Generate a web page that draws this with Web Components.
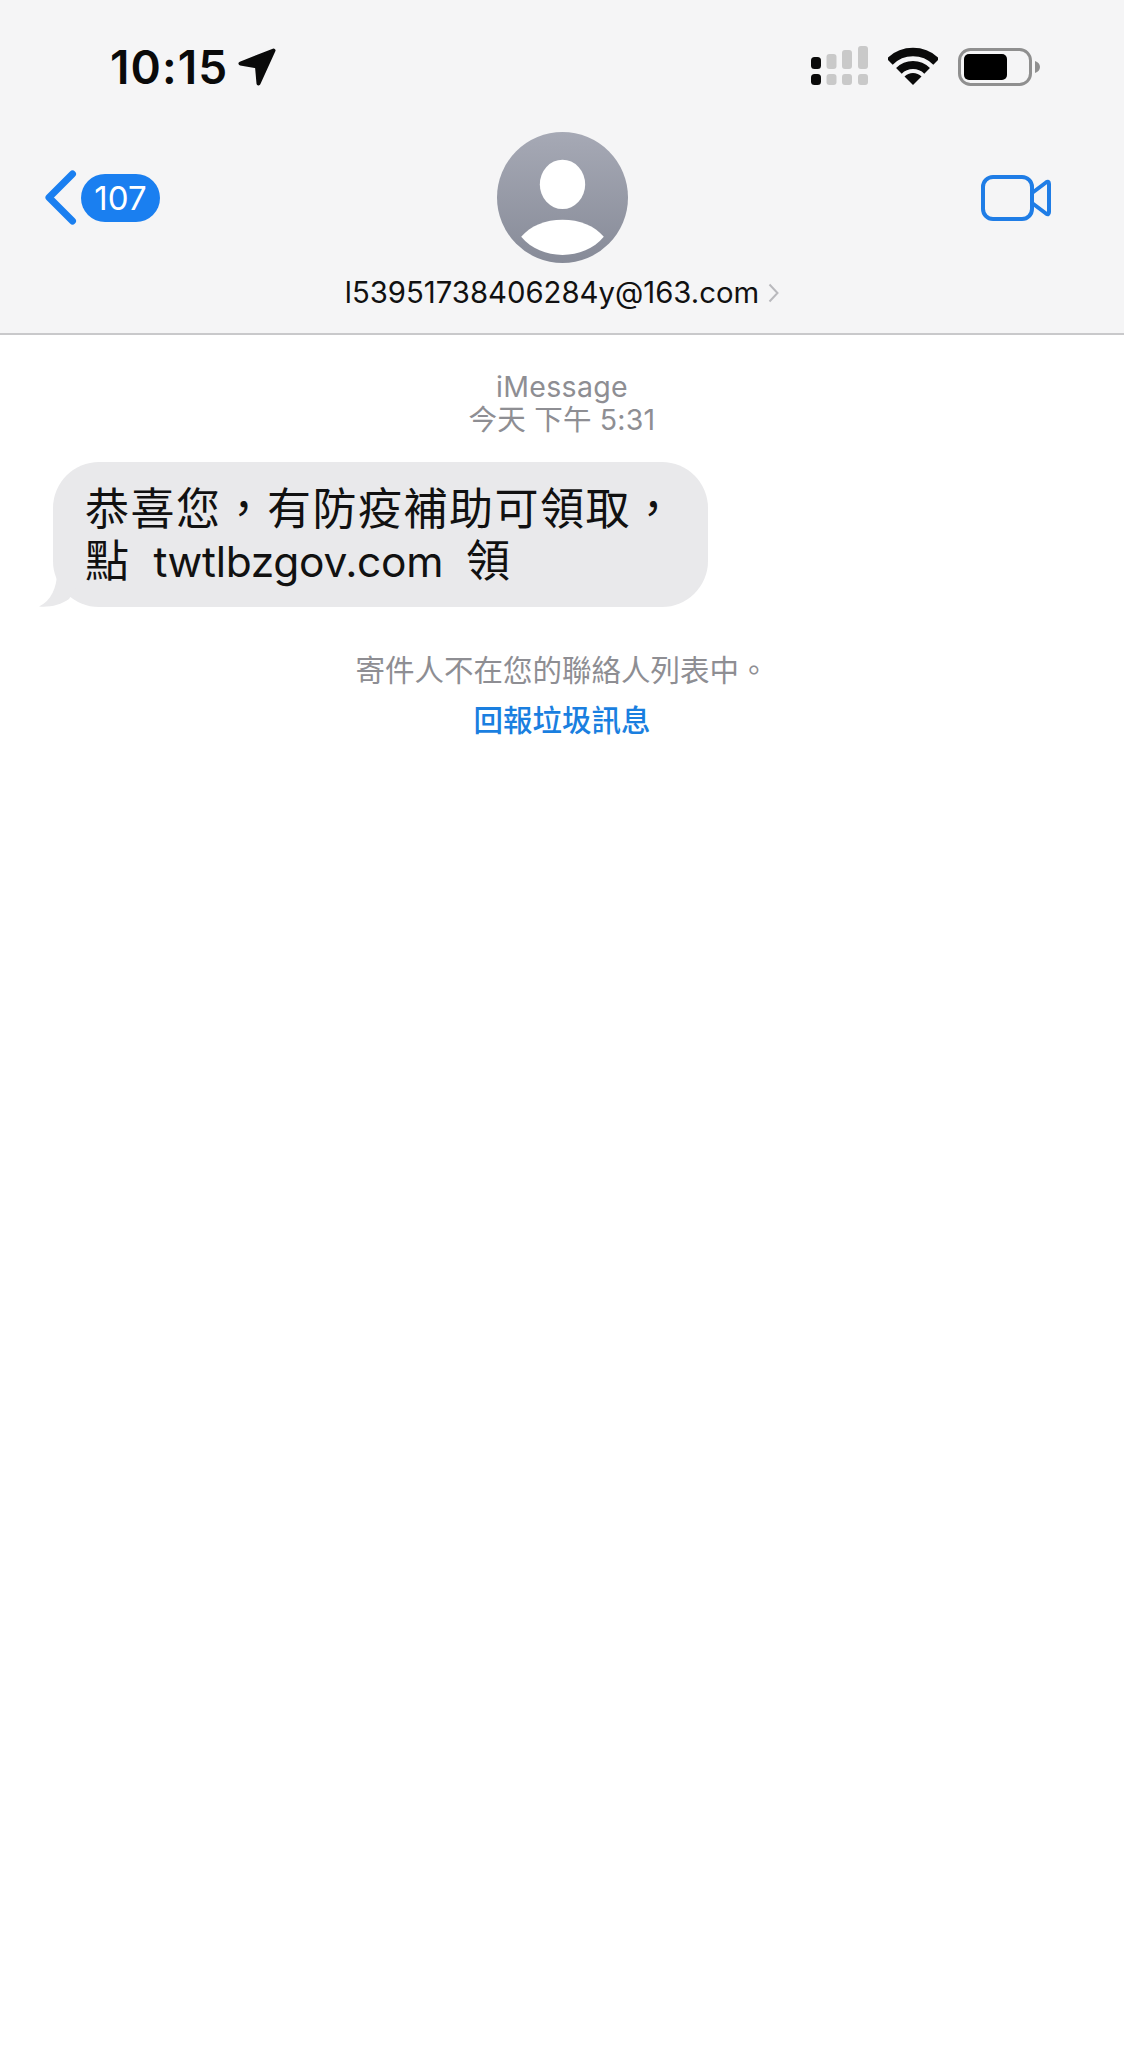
<!DOCTYPE html>
<html lang="zh-Hant">
<head>
<meta charset="utf-8">
<title>iMessage</title>
<style>
  html, body { margin: 0; padding: 0; background: #fff; }
  body { font-family: Inter, "Noto Sans CJK TC", sans-serif; min-height: 2048px; }
</style>
</head>
<body>
<ios-header>
  <ios-status-bar slot="status" time="10:15"></ios-status-bar>
  <ios-nav slot="nav" count="107"></ios-nav>
  <ios-contact slot="contact" address="l53951738406284y@163.com"></ios-contact>
</ios-header>
<chat-thread>
  <chat-stamp service="iMessage" time="今天 下午 5:31"></chat-stamp>
  <chat-bubble>恭喜您&#65292;有防疫補助可領取&#65292;<br>點 <span style="font-size:42.500px;letter-spacing:-0.3px;word-spacing:0">twtlbzgov.com</span> 領</chat-bubble>
  <sender-notice text="寄件人不在您的聯絡人列表中。" action="回報垃圾訊息"></sender-notice>
</chat-thread>
<script>
function def(name, html) {
  customElements.define(name, class extends HTMLElement {
    connectedCallback() {
      if (this.shadowRoot) return;
      const root = this.attachShadow({ mode: 'open' });
      root.innerHTML = typeof html === 'function' ? html(this) : html;
    }
  });
}

def('ios-header', `
<style>
  :host { display: block; background: #f5f5f6; border-bottom: 2px solid #c9c9cb; height: 333px; box-sizing: content-box; }
  .wrap { display: flex; flex-direction: column; padding-top: 46px; }
</style>
<div class="wrap"><slot name="status"></slot><slot name="nav"></slot><slot name="contact"></slot></div>`);

def('ios-status-bar', el => `
<style>
  :host { display: flex; justify-content: space-between; align-items: center; height: 41px; padding: 0 84px 0 110px; }
  .left { display: flex; align-items: center; gap: 10px; }
  .time { font: 600 46px/41px Inter, sans-serif; color: #0a0a0a; letter-spacing: 1.100px; padding-top: 2px; }
  .right { display: flex; align-items: center; gap: 20px; }
  svg { display: block; }
</style>
<div class="left">
  <span class="time">${el.getAttribute('time')}</span>
  <svg width="38" height="38" viewBox="0 0 38 38"><path d="M35.500 2.500 L2.500 15.500 L19 18.500 L20.500 35.500 Z" fill="#0a0a0a" stroke="#0a0a0a" stroke-width="4" stroke-linejoin="round"/></svg>
</div>
<div class="right">
  <svg width="58" height="41" viewBox="0 0 58 41">
    <g fill="#c9c9c9">
      <rect x="16.500" y="8" width="10" height="15" rx="3"/><rect x="32" y="4" width="10" height="19" rx="3"/><rect x="48" y="0" width="10" height="23" rx="3"/>
      <rect x="16.500" y="28" width="10" height="11" rx="3"/><rect x="32" y="28" width="10" height="11" rx="3"/><rect x="48" y="28" width="10" height="11" rx="3"/>
    </g>
    <g fill="#0a0a0a"><rect x="1" y="11" width="10" height="12" rx="3.500"/><rect x="1" y="28" width="10" height="11" rx="3.500"/></g>
  </svg>
  <svg width="50" height="38" viewBox="0 0 50 38" style="margin-top:-2px">
    <g fill="none" stroke="#0a0a0a">
      <path d="M1.700 14.700 A33 33 0 0 1 48.300 14.700" stroke-width="8.500"/>
      <path d="M10.900 23.900 A20 20 0 0 1 39.100 23.900" stroke-width="8"/>
    </g>
    <path d="M16.500 29.500 A12 12 0 0 1 33.500 29.500 L25 38 Z" fill="#0a0a0a"/>
  </svg>
  <svg width="82" height="38" viewBox="0 0 82 38">
    <rect x="1.500" y="1.500" width="71" height="35" rx="11" fill="none" stroke="#8f8f8f" stroke-width="3"/>
    <rect x="6" y="6" width="43" height="26" rx="5" fill="#000"/>
    <path d="M77 13 C80 14 82 16 82 19 C82 22 80 24 77 25 Z" fill="#8f8f8f"/>
  </svg>
</div>`);

def('ios-nav', el => `
<style>
  :host { display: grid; grid-template-columns: 1fr auto 1fr; align-items: center; padding: 45px 44px 0 44px; }
  .back { display: flex; align-items: center; gap: 4px; }
  .badge { font: 400 33px/48px Inter, sans-serif; color: #fff; background: #1a7ff0; border-radius: 24px; width: 79px; height: 48px; text-align: center; letter-spacing: 0; }
  .avatar { display: block; }
  .video { justify-self: end; display: block; margin-right: 29px; }
</style>
<div class="back">
  <svg width="33" height="55" viewBox="0 0 33 55"><path d="M28.500 4 L5 27.500 L28.500 51" fill="none" stroke="#1a7ff0" stroke-width="7" stroke-linecap="round" stroke-linejoin="round"/></svg>
  <span class="badge">${el.getAttribute('count')}</span>
</div>
<svg class="avatar" width="131" height="131" viewBox="0 0 130 130">
  <defs><linearGradient id="g" x1="0" y1="0" x2="0" y2="1"><stop offset="0" stop-color="#a6a9b5"/><stop offset="1" stop-color="#878b98"/></linearGradient></defs>
  <circle cx="65" cy="65" r="65" fill="url(#g)"/>
  <ellipse cx="65" cy="52" rx="22.500" ry="24.500" fill="#fff"/>
  <path d="M24 104 C33 93 48 87 65 87 C82 87 97 93 106 104 C96 116 81 122 65 122 C49 122 34 116 24 104 Z" fill="#fff"/>
</svg>
<svg class="video" width="70" height="46" viewBox="0 0 70 46">
  <rect x="2" y="2" width="49" height="42" rx="10" fill="none" stroke="#1f7de6" stroke-width="4"/>
  <path d="M51 18 L65 7.500 Q68 5.500 68 9 L68 37 Q68 40.500 65 38.500 L51 28 Z" fill="none" stroke="#1f7de6" stroke-width="4" stroke-linejoin="round"/>
</svg>`);

def('ios-contact', el => `
<style>
  :host { display: flex; justify-content: center; align-items: center; gap: 9px; height: 40px; margin-top: 10px; }
  span { font: 400 29.300px/40px Inter, sans-serif; color: #111; }
  svg { display: block; }
</style>
<span>${el.getAttribute('address')}</span>
<svg width="11" height="20" viewBox="0 0 11 20"><path d="M1.500 1.500 L9.500 10 L1.500 18.500" fill="none" stroke="#b9b9bd" stroke-width="2"/></svg>`);

def('chat-thread', `
<style>:host { display: flex; flex-direction: column; }</style><slot></slot>`);

def('chat-stamp', el => `
<style>
  :host { display: flex; flex-direction: column; align-items: center; padding-top: 35px; color: #8e8e93; text-align: center; }
  div { font: 400 28.500px/33px Inter, "Noto Sans CJK TC", sans-serif; letter-spacing: 0.3px; }
  .t { font-size: 28.500px; letter-spacing: 0.2px; }
</style>
<div>${el.getAttribute('service')}</div>
<div class="t" lang="zh-Hant">${el.getAttribute('time')}</div>`);

def('chat-bubble', `
<style>
  :host { display: block; position: relative; align-self: flex-start; box-sizing: border-box; width: 655px; height: 145px; margin: 26px 0 0 53px; padding: 21px 30px 0 32px;
    background: #e9e9eb; border-radius: 46px; color: #111; font: 400 44px/52px Inter, "Noto Sans CJK TC", sans-serif; letter-spacing: 1.500px; word-spacing: 9px; }
  svg { position: absolute; left: -14px; bottom: 0; display: block; }
</style>
<slot></slot>
<svg width="40" height="34" viewBox="0 0 40 34"><path d="M18 0 C18 14 12 28 0 33.500 C10 34.500 22 32 30 26 L40 10 Z" fill="#e9e9eb"/></svg>`);

def('sender-notice', el => `
<style>
  :host { display: flex; flex-direction: column; align-items: center; padding-top: 43px; }
  .n { font: 400 29.500px/36px "Noto Sans CJK TC", sans-serif; color: #8e8e93; }
  .a { font: 500 29.500px/36px "Noto Sans CJK TC", sans-serif; color: #1a7fe0; margin-top: 14px; }
</style>
<div class="n" lang="zh-Hant">${el.getAttribute('text')}</div>
<div class="a" lang="zh-Hant">${el.getAttribute('action')}</div>`);
</script>
</body>
</html>
